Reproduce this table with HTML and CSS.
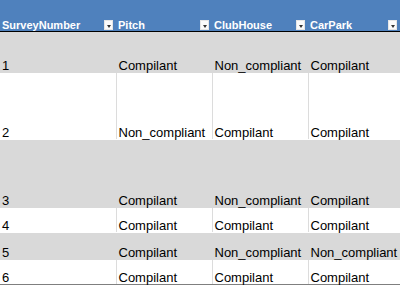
FILE: index.html
```html
<!DOCTYPE html>
<html>
<head>
<meta charset="utf-8">
<link rel="stylesheet" href="styles.css">
</head>
<body>
<table class="sheet">
  <colgroup>
    <col class="c1"><col class="c2"><col class="c3"><col class="c4">
  </colgroup>
  <thead>
    <tr class="head">
      <th><div class="hcell"><span>SurveyNumber</span><span class="dd"></span></div></th>
      <th><div class="hcell"><span>Pitch</span><span class="dd"></span></div></th>
      <th><div class="hcell"><span>ClubHouse</span><span class="dd"></span></div></th>
      <th><div class="hcell"><span>CarPark</span><span class="dd"></span></div></th>
    </tr>
  </thead>
  <tbody>
    <tr class="band r1"><td>1</td><td>Compilant</td><td>Non_compliant</td><td>Compilant</td></tr>
    <tr class="plain r2"><td>2</td><td>Non_compliant</td><td>Compilant</td><td>Compilant</td></tr>
    <tr class="band r3"><td>3</td><td>Compilant</td><td>Non_compliant</td><td>Compilant</td></tr>
    <tr class="plain r4"><td>4</td><td>Compilant</td><td>Compilant</td><td>Compilant</td></tr>
    <tr class="band r5"><td>5</td><td>Compilant</td><td>Non_compliant</td><td>Non_compliant</td></tr>
    <tr class="plain r6 last"><td>6</td><td>Compilant</td><td>Compilant</td><td>Compilant</td></tr>
  </tbody>
</table>
</body>
</html>
```
FILE: styles.css
```css
html, body {
  margin: 0;
  padding: 0;
  background: #ffffff;
  overflow: hidden;
}
.sheet {
  border-collapse: collapse;
  table-layout: fixed;
  width: 400px;
  font-family: "Liberation Sans", Arial, sans-serif;
}
.c1 { width: 116px; }
.c2 { width: 96px; }
.c3 { width: 96px; }
.c4 { width: 92px; }

.head th {
  background: #4f81bd;
  color: #ffffff;
  font-size: 11px;
  font-weight: bold;
  line-height: 12px;
  height: 31px;
  padding: 0 0 0 2px;
  text-align: left;
  vertical-align: bottom;
  border-bottom: 1px solid #000000;
  white-space: nowrap;
}
.hcell {
  display: flex;
  justify-content: space-between;
  align-items: flex-end;
}
.dd {
  position: relative;
  width: 9px;
  height: 10px;
  margin-right: 3px;
  margin-bottom: 1px;
  background: #fbfbfb;
  border: 1px solid #e6e6e6;
  box-sizing: border-box;
}
.dd::after {
  content: "";
  position: absolute;
  left: 1.5px;
  top: 4px;
  border-left: 2.5px solid transparent;
  border-right: 2.5px solid transparent;
  border-top: 3px solid #333333;
}

td {
  font-size: 13px;
  line-height: 13px;
  color: #000000;
  padding: 0 0 0 2px;
  vertical-align: bottom;
  white-space: nowrap;
  overflow: visible;
}
.band td {
  background: #d9d9d9;
  border-right: 1px solid #d9d9d9;
  border-bottom: 1px solid #d9d9d9;
}
.plain td {
  background: #ffffff;
  border-right: 1px solid #dcdcdc;
  border-bottom: 1px solid #ffffff;
}
.r1 td { height: 40px; }
.r2 td { height: 66px; }
.r3 td { height: 67px; }
.r4 td { height: 24px; }
.r5 td { height: 26px; }
.r6 td { height: 24px; }
.last td { border-bottom: 1px solid #7f7f7f; }
```
